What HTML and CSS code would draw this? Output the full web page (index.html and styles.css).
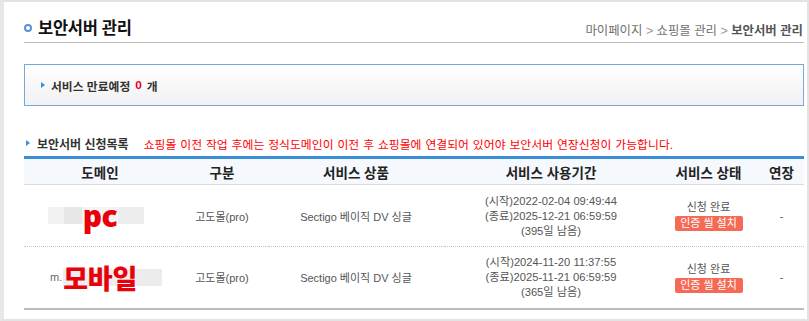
FILE: index.html
```html
<!DOCTYPE html>
<html lang="ko">
<head>
<meta charset="utf-8">
<title>보안서버 관리</title>
<link rel="stylesheet" href="styles.css">
</head>
<body>
<div class="frame">
  <div class="content">
    <div class="titlebar">
      <h2 class="title"><span class="ring"></span>보안서버 관리</h2>
      <div class="crumb">마이페이지 <span class="gt">&gt;</span> 쇼핑몰 관리 <span class="gt">&gt;</span> <b>보안서버 관리</b></div>
    </div>

    <div class="expire"><span class="tri"></span>서비스 만료예정 <em>0</em> 개</div>

    <div class="sec">
      <span class="tri"></span><b class="sec-title">보안서버 신청목록</b>
      <span class="notice">쇼핑몰 이전 작업 후에는 정식도메인이 이전 후 쇼핑몰에 연결되어 있어야 보안서버 연장신청이 가능합니다.</span>
    </div>

    <table class="list">
      <colgroup>
        <col class="c1"><col class="c2"><col class="c3"><col class="c4"><col class="c5"><col class="c6">
      </colgroup>
      <thead>
        <tr><th>도메인</th><th>구분</th><th>서비스 상품</th><th>서비스 사용기간</th><th>서비스 상태</th><th>연장</th></tr>
      </thead>
      <tbody>
        <tr class="first">
          <td>
            <span class="dom dom-pc">
              <span class="blur b1"></span><span class="blur b2"></span><span class="mark pc">pc</span><span class="blur b3"></span>
            </span>
          </td>
          <td>고도몰(pro)</td>
          <td>Sectigo 베이직 DV 싱글</td>
          <td class="period">(시작)2022-02-04 09:49:44<br>(종료)2025-12-21 06:59:59<br>(395일 남음)</td>
          <td class="state"><div>신청 완료</div><span class="badge">인증 씰 설치</span></td>
          <td>-</td>
        </tr>
        <tr>
          <td>
            <span class="dom dom-m">
              <span class="mdot">m.</span><span class="mark mob">모바일</span><span class="blur b4"></span>
            </span>
          </td>
          <td>고도몰(pro)</td>
          <td>Sectigo 베이직 DV 싱글</td>
          <td class="period">(시작)2024-11-20 11:37:55<br>(종료)2025-11-21 06:59:59<br>(365일 남음)</td>
          <td class="state"><div>신청 완료</div><span class="badge">인증 씰 설치</span></td>
          <td>-</td>
        </tr>
      </tbody>
    </table>
  </div>
</div>
</body>
</html>
```

FILE: styles.css
```css
* { box-sizing: border-box; }
html, body { margin: 0; padding: 0; background: #fff; }
body {
  font-family: "Liberation Sans", "Noto Sans CJK KR", sans-serif;
  color: #555;
}
.frame {
  position: relative;
  width: 809px;
  height: 321px;
  border-top: 2px solid #e3e3e3;
  border-right: 2px solid #e3e3e3;
  border-bottom: 2px solid #e3e3e3;
  border-left: 4px solid #e8e8e8;
  overflow: hidden;
}
.frame::before {
  content: "";
  position: absolute;
  left: -3px;
  top: 13px;
  bottom: 0;
  width: 2px;
  background: #7eaad6;
}
.content {
  padding: 0 3px 0 20px;
}
.titlebar {
  display: flex;
  justify-content: space-between;
  align-items: flex-end;
  height: 41px;
  border-bottom: 1px solid #bdbdbd;
}
.title {
  margin: 0;
  display: flex;
  align-items: center;
  gap: 6px;
  font-size: 16.5px;
  line-height: 20px;
  font-weight: bold;
  color: #111;
  padding-bottom: 4px;
  letter-spacing: -0.3px;
}
.ring {
  width: 8px;
  height: 8px;
  border: 2px solid #5a8fd9;
  border-radius: 50%;
}
.crumb {
  font-size: 12.4px;
  line-height: 14px;
  color: #707070;
  padding-bottom: 4px;
  padding-right: 1px;
}
.crumb .gt { color: #999; }
.crumb b { color: #555; }
.tri {
  display: inline-block;
  width: 0;
  height: 0;
  border-left: 4px solid #3a8ed8;
  border-top: 3.5px solid transparent;
  border-bottom: 3.5px solid transparent;
}
.expire {
  margin-top: 21px;
  height: 42px;
  border: 1px solid #74aadb;
  background: linear-gradient(#ffffff, #f1f1f1);
  display: flex;
  align-items: center;
  gap: 6px;
  padding-left: 16px;
  font-size: 11.8px;
  font-weight: bold;
  color: #333;
}
.expire em { font-style: normal; color: #e2002b; margin: 0 -1px; }
.sec {
  margin-top: 29px;
  height: 16px;
  display: flex;
  align-items: center;
  padding-left: 2px;
  font-size: 11.85px;
}
.sec-title {
  margin-left: 7px;
  color: #333;
  font-size: 12px;
}
.notice {
  margin-left: 15px;
  color: #f00;
  word-spacing: 0.6px;
}
.list {
  margin-top: 5px;
  width: 780px;
  border-collapse: collapse;
  table-layout: fixed;
  border-top: 3px solid #3b8ed6;
  border-bottom: 2px solid #bcbcbc;
}
.c1 { width: 152px; }
.c2 { width: 92px; }
.c3 { width: 176px; }
.c4 { width: 214px; }
.c5 { width: 101px; }
.c6 { width: 45px; }
.list th {
  height: 27px;
  padding: 0;
  background: #f5f8fc;
  border-bottom: 1px solid #dcdcdc;
  font-size: 13.5px;
  font-weight: bold;
  color: #222;
}
.list td {
  height: 62px;
  padding: 0;
  text-align: center;
  vertical-align: middle;
  font-size: 11px;
  color: #555;
}
.list tr.first td { border-bottom: 1px dotted #c8c8c8; }
.period {
  line-height: 15px;
  color: #6a6a6a;
  font-size: 11.2px !important;
  padding-top: 1px !important;
}
.state { line-height: 15px; color: #444; }
.badge {
  display: inline-block;
  width: 68px;
  height: 15px;
  line-height: 15px;
  background: #f46a55;
  color: #fff;
  border-radius: 2px;
  margin-top: 1px;
}
.dom {
  display: inline-flex;
  align-items: center;
  height: 30px;
  vertical-align: middle;
}
.dom-pc { margin-right: 8px; }
.dom-m { margin-left: 12px; }
.blur { display: inline-block; height: 17px; }
.b1 { width: 16px; background: #f2f2f2; }
.b2 { width: 18px; background: #e7e7e7; }
.b3 { width: 26px; background: #ededed; }
.b4 { width: 25px; background: #ececec; }
.mark {
  color: #e8000b;
  font-weight: bold;
  background: #f4f4f4;
  height: 17px;
  display: inline-flex;
  align-items: center;
}
.pc {
  font-family: "Open Sans", "Liberation Sans", sans-serif;
  font-size: 30px;
  font-weight: 800;
  width: 36px;
  justify-content: center;
  letter-spacing: -0.5px;
}
.mob {
  font-family: "Noto Sans CJK KR", sans-serif;
  font-size: 27px;
  font-weight: 900;
  letter-spacing: -0.3px;
  background: #eeeeee;
}
.mdot {
  font-size: 11px;
  color: #666;
  margin-right: 1px;
  align-self: center;
}
```
